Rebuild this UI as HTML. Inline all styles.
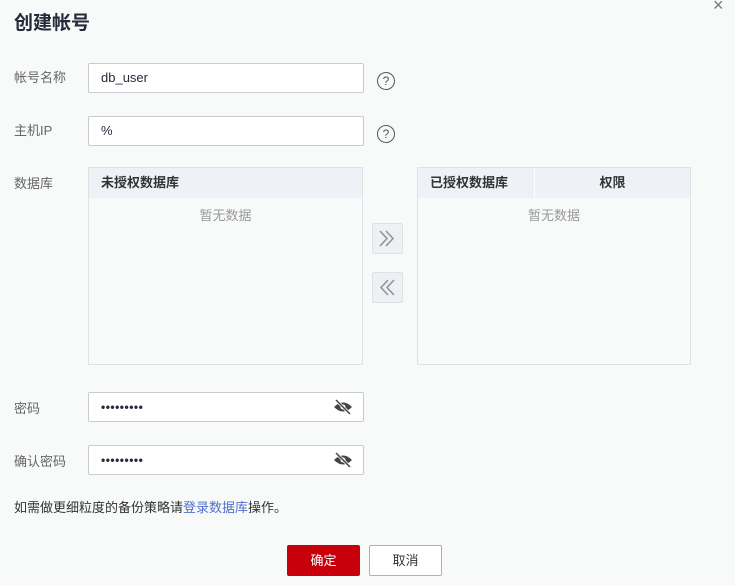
<!DOCTYPE html>
<html><head><meta charset="utf-8"><style>
*{box-sizing:border-box;margin:0;padding:0}
body{width:735px;height:585px;background:#f7faf8;font-family:"Liberation Sans","Noto Sans CJK SC",sans-serif;position:relative;overflow:hidden;color:#333}
.a{position:absolute}
.t{left:14px;top:8px;font-size:19px;font-weight:bold;color:#252b3a}
.lbl{left:14px;font-size:13px;color:#666}
.in{left:88px;width:276px;height:30px;border:1px solid #c8cbd0;border-radius:2px;background:#fff;font-size:13px;padding-left:12px;line-height:28px;color:#252b3a}
.q{width:18px;height:18px;border:1.3px solid #555;border-radius:50%;font-size:12px;text-align:center;line-height:16px;color:#555}
.box{border:1px solid #dfe1e6;background:#f7faf8;height:198px;top:167px}
.hd{height:30px;background:#eef1f6;font-size:13px;font-weight:bold;line-height:30px;color:#333}
.em{text-align:center;font-size:13px;color:#999;margin-top:7px}
.ar{left:372px;width:31px;height:31px;border:1px solid #dfe1e6;background:#eef0f3;border-radius:2px}
.dots{font-size:12px;letter-spacing:0.5px;font-weight:bold}
.eye{right:10px;top:6px}
.btn{top:545px;width:73px;height:31px;border-radius:2px;font-size:13px;text-align:center;line-height:29px}
</style></head><body>
<div class="a t">创建帐号</div>
<div class="a" style="left:713px;top:-5px;font-size:18px;color:#777">×</div>
<div class="a lbl" style="top:67px">帐号名称</div>
<div class="a in" style="top:63px">db_user</div>
<div class="a q" style="left:377px;top:72px">?</div>
<div class="a lbl" style="top:120px">主机IP</div>
<div class="a in" style="top:116px">%</div>
<div class="a q" style="left:377px;top:125px">?</div>
<div class="a lbl" style="top:173px">数据库</div>
<div class="a box" style="left:88px;width:275px"><div class="hd" style="padding-left:12px">未授权数据库</div><div class="em">暂无数据</div></div>
<div class="a ar" style="top:223px"><svg width="29" height="29" viewBox="0 0 29 29"><path d="M7 7l7 7.5-7 7.5M13 7l7 7.5-7 7.5" fill="none" stroke="#8f959e" stroke-width="1.6"/></svg></div>
<div class="a ar" style="top:272px"><svg width="29" height="29" viewBox="0 0 29 29"><path d="M15 7l-7 7.5 7 7.5M21 7l-7 7.5 7 7.5" fill="none" stroke="#8f959e" stroke-width="1.6"/></svg></div>
<div class="a box" style="left:417px;width:274px"><div class="hd" style="display:flex"><div style="width:117px;padding-left:12px;border-right:1px solid #fff">已授权数据库</div><div style="flex:1;text-align:center">权限</div></div><div class="em">暂无数据</div></div>
<div class="a lbl" style="top:398px">密码</div>
<div class="a in" style="top:392px"><span class="dots">•••••••••</span>
<svg class="a eye" width="20" height="16" viewBox="0 0 20 16"><path d="M1 8Q10-1 19 8Q10 17 1 8Z" fill="#444"/><circle cx="10" cy="8" r="2.5" fill="#fff"/><path d="M3 1L17 15" stroke="#fff" stroke-width="3"/><path d="M3 1L17 15" stroke="#444" stroke-width="1.5"/></svg></div>
<div class="a lbl" style="top:451px">确认密码</div>
<div class="a in" style="top:445px"><span class="dots">•••••••••</span>
<svg class="a eye" width="20" height="16" viewBox="0 0 20 16"><path d="M1 8Q10-1 19 8Q10 17 1 8Z" fill="#444"/><circle cx="10" cy="8" r="2.5" fill="#fff"/><path d="M3 1L17 15" stroke="#fff" stroke-width="3"/><path d="M3 1L17 15" stroke="#444" stroke-width="1.5"/></svg></div>
<div class="a" style="left:14px;top:497px;font-size:13px;color:#333">如需做更细粒度的备份策略请<span style="color:#526ecc">登录数据库</span>操作。</div>
<div class="a btn" style="left:287px;background:#c7000b;color:#fff;border:1px solid #c7000b">确定</div>
<div class="a btn" style="left:369px;background:#fff;color:#333;border:1px solid #adb0b8">取消</div>
</body></html>
